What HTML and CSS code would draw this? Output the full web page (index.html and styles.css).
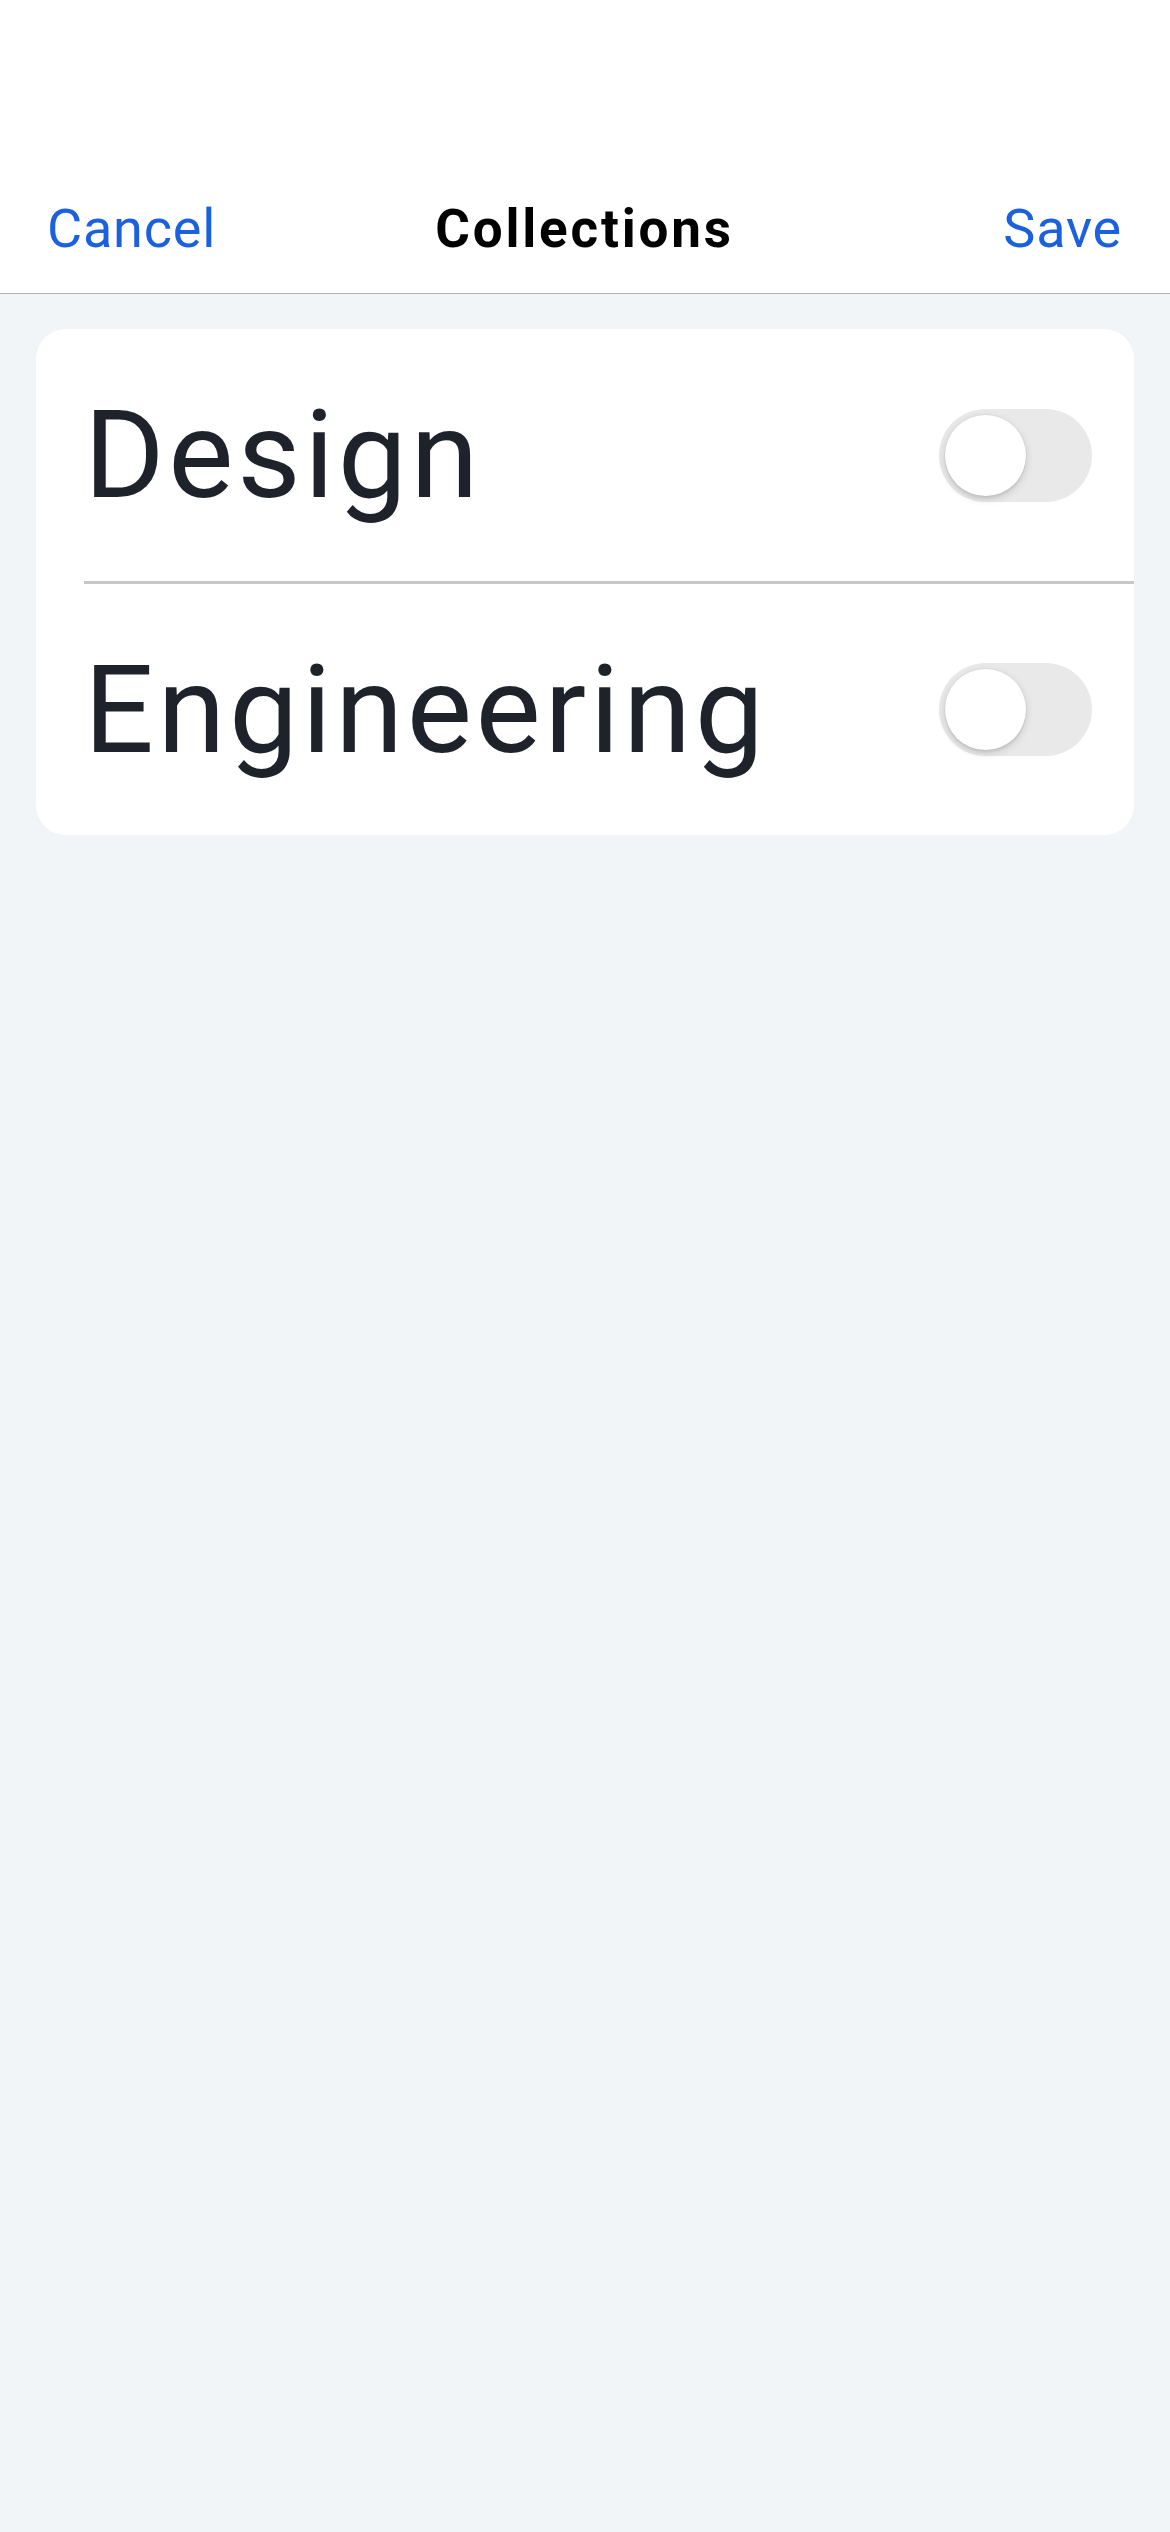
FILE: index.html
```html
<!DOCTYPE html>
<html lang="en">
<head>
<meta charset="utf-8">
<title>Collections</title>
<link rel="stylesheet" href="styles.css">
</head>
<body>
<header class="navbar">
  <span class="nav-btn nav-left">Cancel</span>
  <span class="nav-title">Collections</span>
  <span class="nav-btn nav-right">Save</span>
</header>
<main class="content">
  <section class="card">
    <div class="row">
      <span class="row-label">Design</span>
      <span class="switch"><span class="knob"></span></span>
    </div>
    <div class="divider"></div>
    <div class="row row-last">
      <span class="row-label">Engineering</span>
      <span class="switch"><span class="knob"></span></span>
    </div>
  </section>
</main>
</body>
</html>
```

FILE: styles.css
```css
html, body {
  margin: 0;
  padding: 0;
}

body {
  background: #f2f5f8;
  font-family: Roboto, "Liberation Sans", sans-serif;
  min-height: 2532px;
}

.navbar {
  box-sizing: border-box;
  height: 294px;
  background: #ffffff;
  border-bottom: 1px solid #b3b3b3;
  display: grid;
  grid-template-columns: 1fr auto 1fr;
  align-items: end;
  padding: 0 48px 33px 47px;
}

.nav-btn {
  font-size: 54px;
  line-height: 62px;
  color: #1b61df;
  letter-spacing: 0.8px;
}

.nav-left {
  justify-self: start;
}

.nav-right {
  justify-self: end;
}

.nav-title {
  font-size: 53px;
  line-height: 62px;
  font-weight: 700;
  color: #000000;
  letter-spacing: 2.8px;
  justify-self: center;
}

.content {
  padding: 35px 36px 0 36px;
}

.card {
  background: #ffffff;
  border-radius: 30px;
  overflow: hidden;
}

.row {
  height: 252px;
  display: flex;
  align-items: center;
  justify-content: space-between;
  padding: 0 42px 0 48px;
}

.row-last {
  height: 251px;
}

.row-label {
  font-size: 123px;
  color: #1e222b;
  letter-spacing: 3.6px;
}

.divider {
  height: 3px;
  margin-left: 48px;
  background: #c6c6c8;
}

.switch {
  position: relative;
  width: 153px;
  height: 93px;
  border-radius: 47px;
  background: #e9e9ea;
  flex-shrink: 0;
}

.knob {
  position: absolute;
  left: 6px;
  top: 6px;
  width: 81px;
  height: 81px;
  border-radius: 50%;
  background: #ffffff;
  box-shadow: 0 3px 9px rgba(0, 0, 0, 0.14), 0 3px 2px rgba(0, 0, 0, 0.05), 0 0 0 1px rgba(0, 0, 0, 0.03);
}
```
